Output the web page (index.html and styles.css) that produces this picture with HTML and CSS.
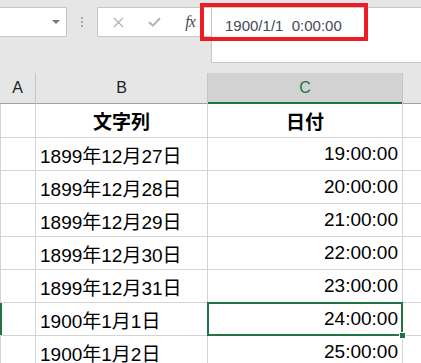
FILE: index.html
```html
<!DOCTYPE html>
<html lang="ja">
  <head>
    <meta charset="UTF-8" />
    <title>Excel 日付</title>
    <link rel="stylesheet" href="styles.css">
  </head>
  <body>
    <div class="toolbar">
      <div class="namebox"><span class="arrow"></span></div>
      <div class="grip"><i></i><i></i><i></i></div>
      <div class="fxbtns">
        <span class="btn">
          <svg width="11" height="11" viewBox="0 0 11 11"><path d="M1 1L10 10M10 1L1 10" stroke="#b4b4b4" stroke-width="1.4" fill="none"/></svg>
        </span>
        <span class="btn">
          <svg width="13" height="10" viewBox="0 0 13 10"><path d="M1 5L4.8 8.6L12 1.2" stroke="#b4b4b4" stroke-width="2" fill="none"/></svg>
        </span>
        <span class="btn fx">fx</span>
      </div>
      <div class="formula">1900/1/1&nbsp; 0:00:00</div>
    </div>
    <div class="mark"></div>

    <div class="heads">
      <div class="head">A</div>
      <div class="head">B</div>
      <div class="head active">C</div>
      <div class="head"></div>
    </div>
    <div class="cells">
      <div class="cell a"></div><div class="cell title">文字列</div><div class="cell title">日付</div><div class="cell"></div>
      <div class="cell a"></div><div class="cell">1899年12月27日</div><div class="cell num">19:00:00</div><div class="cell"></div>
      <div class="cell a"></div><div class="cell">1899年12月28日</div><div class="cell num">20:00:00</div><div class="cell"></div>
      <div class="cell a"></div><div class="cell">1899年12月29日</div><div class="cell num">21:00:00</div><div class="cell"></div>
      <div class="cell a"></div><div class="cell">1899年12月30日</div><div class="cell num">22:00:00</div><div class="cell"></div>
      <div class="cell a"></div><div class="cell">1899年12月31日</div><div class="cell num">23:00:00</div><div class="cell"></div>
      <div class="cell a row-sel"></div><div class="cell">1900年1月1日</div><div class="cell num sel">24:00:00</div><div class="cell"></div>
      <div class="cell a"></div><div class="cell">1900年1月2日</div><div class="cell num">25:00:00</div><div class="cell"></div>
    </div>
  </body>
</html>
```

FILE: styles.css
```css
body {
  margin: 0;
  width: 421px;
  height: 363px;
  overflow: hidden;
  background-color: #e6e6e6;
  font-family: "Liberation Sans", "Noto Sans CJK JP", sans-serif;
  position: relative;
}
.toolbar {
  display: flex;
  align-items: flex-start;
  height: 73px;
  padding-top: 7px;
  box-sizing: border-box;
}
.namebox {
  width: 68px;
  height: 30px;
  margin-left: -1px;
  box-sizing: border-box;
  background-color: #fff;
  border: 1px solid #c6c6c6;
  position: relative;
}
.arrow {
  position: absolute;
  right: 6px;
  top: 12px;
  border-left: 4px solid transparent;
  border-right: 4px solid transparent;
  border-top: 4px solid #777;
}
.grip {
  width: 30px;
  height: 30px;
  display: flex;
  flex-direction: column;
  align-items: center;
  justify-content: center;
  gap: 2px;
}
.grip i {
  width: 2px;
  height: 2px;
  background-color: #a8a8a8;
}
.fxbtns {
  width: 114px;
  height: 30px;
  box-sizing: border-box;
  background-color: #fff;
  border: 1px solid #c6c6c6;
  border-right: none;
  display: flex;
  align-items: center;
  padding-left: 2px;
}
.btn {
  width: 36px;
  display: flex;
  justify-content: center;
  align-items: center;
}
.fx {
  font-family: "Liberation Serif", serif;
  font-style: italic;
  font-size: 16px;
  color: #4a4a4a;
  letter-spacing: -1px;
}
.formula {
  flex: 1;
  height: 56px;
  box-sizing: border-box;
  background-color: #fff;
  border: 1px solid #c6c6c6;
  border-right: none;
  padding: 9px 0 0 13px;
  font-size: 15px;
  color: #444a5a;
}
.mark {
  position: absolute;
  left: 200px;
  top: 3px;
  width: 168px;
  height: 38px;
  box-sizing: border-box;
  border: 4px solid #ec1c24;
}
.heads,
.cells {
  display: grid;
  grid-template-columns: 35px 171px 194px 1fr;
  column-gap: 1px;
}
.heads {
  background-color: #c6c6c6;
}
.head {
  height: 31px;
  box-sizing: border-box;
  background-color: #e6e6e6;
  box-shadow: inset 0 -1px #a0a0a0;
  display: flex;
  justify-content: center;
  align-items: center;
  font-size: 16px;
  color: #222;
  padding-bottom: 1px;
}
.head.active {
  background-color: #d2d2d2;
  box-shadow: inset 0 -2px #217346;
  color: #217346;
}
.cells {
  background-color: #d4d4d4;
  row-gap: 1px;
  grid-template-rows: 33px;
  grid-auto-rows: 32px;
}
.cell {
  background-color: #fff;
  display: flex;
  align-items: center;
  padding: 0 4px;
  font-size: 19px;
  color: #000;
  white-space: nowrap;
  overflow: hidden;
}
.cell.a {
  border-left: 1px solid #d4d4d4;
  padding: 0;
}
.cell.a.row-sel {
  border-left: 2px solid #217346;
}
.title {
  justify-content: center;
  font-weight: bold;
}
.num {
  justify-content: flex-end;
}
.sel {
  position: relative;
  overflow: visible;
  outline: 2px solid #217346;
  outline-offset: -1px;
  z-index: 1;
}
.sel::after {
  content: "";
  position: absolute;
  right: -4px;
  bottom: -4px;
  width: 5px;
  height: 5px;
  background-color: #217346;
  border: 1px solid #fff;
}
```
